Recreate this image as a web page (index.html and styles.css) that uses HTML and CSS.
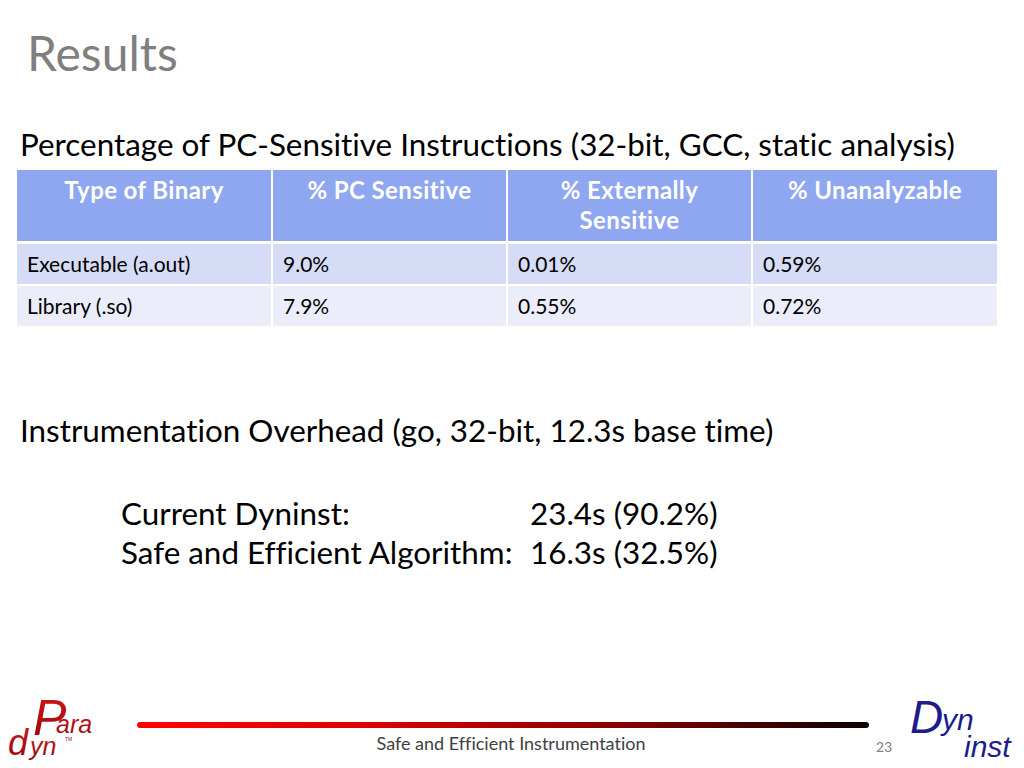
FILE: index.html
```html
<!DOCTYPE html>
<html>
<head>
<meta charset="utf-8">
<link rel="stylesheet" href="styles.css">
</head>
<body>
<div class="slide">
  <h1 class="title">Results</h1>
  <p class="lead">Percentage of PC-Sensitive Instructions (32-bit, GCC, static analysis)</p>
  <table class="data">
    <thead>
      <tr>
        <th class="c1">Type of Binary</th>
        <th class="c2">% PC Sensitive</th>
        <th class="c3">% Externally Sensitive</th>
        <th class="c4">% Unanalyzable</th>
      </tr>
    </thead>
    <tbody>
      <tr class="odd">
        <td>Executable (a.out)</td>
        <td>9.0%</td>
        <td>0.01%</td>
        <td>0.59%</td>
      </tr>
      <tr class="even">
        <td>Library (.so)</td>
        <td>7.9%</td>
        <td>0.55%</td>
        <td>0.72%</td>
      </tr>
    </tbody>
  </table>
  <p class="lead second">Instrumentation Overhead (go, 32-bit, 12.3s base time)</p>
  <div class="results">
    <span>Current Dyninst:</span><span>23.4s (90.2%)</span>
    <span>Safe and Efficient Algorithm:</span><span>16.3s (32.5%)</span>
  </div>
  <div class="spacer"></div>
  <footer class="footer">
    <svg class="logo-paradyn" width="100" height="84" viewBox="0 0 100 84">
      <defs>
        <linearGradient id="pg" x1="0" y1="0" x2="0" y2="1">
          <stop offset="0" stop-color="#d8141c"/>
          <stop offset="1" stop-color="#8c0a10"/>
        </linearGradient>
      </defs>
      <text x="29" y="51" class="pd-big" fill="url(#pg)">P</text>
      <text x="52" y="49" class="pd-small" fill="url(#pg)">ara</text>
      <text x="4" y="71" class="pd-d" fill="url(#pg)">d</text>
      <text x="26" y="71" class="pd-small" fill="url(#pg)">yn</text>
      <text x="61" y="57" class="pd-tm" fill="#a01018">TM</text>
    </svg>
    <div class="mid">
      <div class="rule"></div>
      <div class="caption">Safe and Efficient Instrumentation</div>
    </div>
    <div class="pagenum">23</div>
    <svg class="logo-dyninst" width="110" height="88" viewBox="0 0 110 88">
      <text x="2" y="53" class="dy-big">D</text>
      <text x="34" y="50" class="dy-small">yn</text>
      <text x="56" y="77" class="dy-small">inst</text>
    </svg>
  </footer>
</div>
</body>
</html>
```
FILE: styles.css
```css
html, body {
  margin: 0;
  padding: 0;
  background: #ffffff;
}
.slide {
  width: 1024px;
  height: 768px;
  box-sizing: border-box;
  display: flex;
  flex-direction: column;
  font-family: "Lato", "Liberation Sans", sans-serif;
  font-variant-ligatures: no-common-ligatures;
  color: #000;
  overflow: hidden;
}
.title {
  margin: 24px 0 0 27px;
  font-weight: 400;
  font-size: 48px;
  line-height: 58px;
  color: #7f7f7f;
}
.lead {
  margin: 42px 0 0 20px;
  font-size: 31.4px;
  line-height: 40px;
  white-space: nowrap;
}
.lead.second {
  margin-top: 84px;
}
.data {
  margin: 6px 0 0 17px;
  width: 980px;
  border-collapse: collapse;
  font-size: 21px;
}
.data th {
  background: #8fa6f0;
  color: #ffffff;
  font-weight: 700;
  font-size: 24px;
  letter-spacing: 0.4px;
  text-align: center;
  vertical-align: top;
  height: 72px;
  padding: 5px 14px 0;
  box-sizing: border-box;
  line-height: 30px;
  border-left: 2px solid #ffffff;
  border-bottom: 3px solid #ffffff;
}
.data th:first-child,
.data td:first-child {
  border-left: none;
}
.data .c1 { width: 255px; }
.data .c2 { width: 235px; }
.data .c3 { width: 245px; }
.data td {
  padding: 0 10px;
  height: 41px;
  line-height: 40px;
  border-left: 2px solid #ffffff;
  border-bottom: 2px solid #ffffff;
  box-sizing: border-box;
}
.data tr.odd td { background: #d6dcf5; }
.data tr.even td { background: #ecedfa; border-bottom: none; }
.results {
  margin: 44px 0 0 121px;
  display: grid;
  grid-template-columns: 409px auto;
  font-size: 31.4px;
  line-height: 39px;
}
.spacer { flex: 1; }
.footer {
  display: flex;
  align-items: flex-start;
  height: 76px;
}
.logo-paradyn {
  margin: -8px 0 0 4px;
  flex: none;
  overflow: visible;
}
.pd-big {
  font-family: "Liberation Sans", sans-serif;
  font-style: italic;
  font-size: 50px;
}
.pd-d {
  font-family: "Liberation Sans", sans-serif;
  font-style: italic;
  font-size: 36px;
}
.pd-small {
  font-family: "Liberation Sans", sans-serif;
  font-style: italic;
  font-size: 25px;
}
.pd-tm {
  font-family: "Liberation Sans", sans-serif;
  font-size: 5px;
}
.mid {
  margin-left: 33px;
  width: 732px;
  flex: none;
  display: flex;
  flex-direction: column;
}
.rule {
  margin-top: 30px;
  height: 6px;
  border-radius: 3px;
  background: linear-gradient(to right, #ff0000 0%, #e00000 30%, #8a0000 65%, #0a0000 100%);
}
.caption {
  margin-top: 4px;
  padding-left: 16px;
  text-align: center;
  font-size: 18px;
  line-height: 22px;
  color: #3f3f3f;
}
.pagenum {
  margin: 46px 0 0 7px;
  font-size: 14px;
  color: #808080;
  flex: none;
  width: 30px;
}
.logo-dyninst {
  margin: -12px 0 0 2px;
  flex: none;
  overflow: visible;
}
.dy-big {
  font-family: "Liberation Sans", sans-serif;
  font-style: italic;
  font-size: 46px;
  fill: #1c1c8c;
}
.dy-small {
  font-family: "Liberation Sans", sans-serif;
  font-style: italic;
  font-size: 30px;
  fill: #1c1c8c;
}
```
